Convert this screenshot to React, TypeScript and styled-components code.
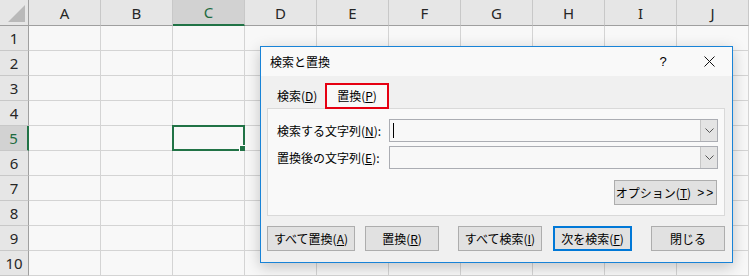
import { Fragment } from "react";
import styled, { createGlobalStyle } from "styled-components";

const GREEN = "#217346";
const columns = ["A", "B", "C", "D", "E", "F", "G", "H", "I", "J"];
const rows = [1, 2, 3, 4, 5, 6, 7, 8, 9, 10];
const activeCol = "C";
const activeRow = 5;

const GlobalStyle = createGlobalStyle`
  html, body {
    margin: 0;
    padding: 0;
    background: #f8f8f8;
    overflow: hidden;
  }
  * {
    box-sizing: border-box;
  }
`;

export default function App() {
  return (
    <>
      <GlobalStyle />
      <Screen>
        <Sheet>
          <Corner>
            <svg width="17" height="17" viewBox="0 0 17 17">
              <polygon points="17,0 17,17 0,17" fill="#b9b9b9" />
            </svg>
          </Corner>
          {columns.map((c) => (
            <ColHead key={c} $active={c === activeCol}>
              {c}
            </ColHead>
          ))}
          {rows.map((r) => (
            <Fragment key={r}>
              <RowHead $active={r === activeRow}>{r}</RowHead>
              {columns.map((c) => (
                <Cell key={c} $selected={r === activeRow && c === activeCol} />
              ))}
            </Fragment>
          ))}
        </Sheet>

        <Dialog>
          <TitleBar>
            <Title>検索と置換</Title>
            <TitleButton>?</TitleButton>
            <TitleButton>
              <svg width="11" height="11" viewBox="0 0 11 11">
                <path d="M0.5 0.5 L10.5 10.5 M10.5 0.5 L0.5 10.5" stroke="#111" strokeWidth="1" />
              </svg>
            </TitleButton>
          </TitleBar>
          <Body>
            <TabStrip>
              <Tab $width={58}>
                検索(<u>D</u>)
              </Tab>
              <Tab $width={64} $selected>
                置換(<u>P</u>)
              </Tab>
            </TabStrip>
            <Panel>
              <FieldRow>
                <Label>
                  検索する文字列(<u>N</u>):
                </Label>
                <Combo>
                  <Caret />
                  <DropButton>
                    <svg width="9" height="5" viewBox="0 0 9 5">
                      <path d="M0.5 0.5 L4.5 4.5 L8.5 0.5" stroke="#555" fill="none" />
                    </svg>
                  </DropButton>
                </Combo>
              </FieldRow>
              <FieldRow>
                <Label>
                  置換後の文字列(<u>E</u>):
                </Label>
                <Combo>
                  <DropButton>
                    <svg width="9" height="5" viewBox="0 0 9 5">
                      <path d="M0.5 0.5 L4.5 4.5 L8.5 0.5" stroke="#555" fill="none" />
                    </svg>
                  </DropButton>
                </Combo>
              </FieldRow>
              <OptionsRow>
                <Button $width={103}>
                  オプション(<u>T</u>)<Arrows>&gt;&gt;</Arrows>
                </Button>
              </OptionsRow>
            </Panel>
            <ButtonRow>
              <Button $width={88}>
                すべて置換(<u>A</u>)
              </Button>
              <Button $width={74} $gap={10}>
                置換(<u>R</u>)
              </Button>
              <Button $width={84} $gap={19}>
                すべて検索(<u>I</u>)
              </Button>
              <Button $width={79} $gap={11} $focused>
                次を検索(<u>F</u>)
              </Button>
              <Button $width={74} $gap={19}>
                閉じる
              </Button>
            </ButtonRow>
          </Body>
        </Dialog>
      </Screen>
    </>
  );
}

const Screen = styled.div`
  position: relative;
  width: 749px;
  height: 276px;
  overflow: hidden;
  font-family: "Noto Sans CJK JP", "Noto Sans", sans-serif;
`;

const Sheet = styled.div`
  display: grid;
  grid-template-columns: 29px repeat(10, 72px);
  grid-template-rows: 26px;
  grid-auto-rows: 25px;
  font-family: "Noto Sans", "Noto Sans CJK JP", sans-serif;
  font-size: 15px;
  color: #262626;
`;

const Corner = styled.div`
  display: flex;
  align-items: flex-end;
  justify-content: flex-end;
  padding: 0 3px 3px 0;
  background: #e6e6e6;
  border-right: 1px solid #9f9f9f;
  border-bottom: 1px solid #9f9f9f;
`;

const ColHead = styled.div<{ $active?: boolean }>`
  display: flex;
  align-items: center;
  justify-content: center;
  background: ${(p) => (p.$active ? "#d2d2d2" : "#e6e6e6")};
  color: ${(p) => (p.$active ? "#1d6b40" : "#262626")};
  border-right: 1px solid #c8c8c8;
  border-bottom: ${(p) => (p.$active ? `2px solid ${GREEN}` : "1px solid #9f9f9f")};
`;

const RowHead = styled.div<{ $active?: boolean }>`
  display: flex;
  align-items: center;
  justify-content: center;
  background: ${(p) => (p.$active ? "#d2d2d2" : "#e6e6e6")};
  color: ${(p) => (p.$active ? "#1d6b40" : "#262626")};
  border-bottom: 1px solid #c8c8c8;
  border-right: ${(p) => (p.$active ? `2px solid ${GREEN}` : "1px solid #9f9f9f")};
`;

const Cell = styled.div<{ $selected?: boolean }>`
  position: relative;
  background: #f8f8f8;
  border-right: 1px solid #d4d4d4;
  border-bottom: 1px solid #d4d4d4;
  ${(p) =>
    p.$selected &&
    `
    &::before {
      content: "";
      position: absolute;
      left: -1px;
      top: -1px;
      right: -1px;
      bottom: -1px;
      border: 2px solid ${GREEN};
    }
    &::after {
      content: "";
      position: absolute;
      right: -3px;
      bottom: -3px;
      width: 6px;
      height: 6px;
      background: ${GREEN};
      border: 1px solid #fff;
    }
  `}
`;

const Dialog = styled.div`
  position: absolute;
  left: 260px;
  top: 46px;
  width: 473px;
  height: 217px;
  display: flex;
  flex-direction: column;
  border: 1px solid #1883d7;
  background: #f0f0f0;
  box-shadow: 0 4px 14px rgba(0, 0, 0, 0.22);
  font-size: 12px;
  color: #000;
`;

const TitleBar = styled.div`
  display: flex;
  align-items: center;
  height: 29px;
  background: #f9f9f9;
`;

const Title = styled.div`
  flex: 1;
  padding-left: 9px;
  font-size: 12px;
  line-height: 16px;
`;

const TitleButton = styled.div`
  width: 46px;
  height: 29px;
  display: flex;
  align-items: center;
  justify-content: center;
  font-family: "Liberation Sans", sans-serif;
  font-size: 13px;
`;

const Body = styled.div`
  flex: 1;
  display: flex;
  flex-direction: column;
  padding: 7px 7px 0 6px;
`;

const TabStrip = styled.div`
  display: flex;
  align-items: flex-end;
  height: 26px;
  margin-bottom: -1px;
  position: relative;
  z-index: 1;
`;

const Tab = styled.div<{ $width: number; $selected?: boolean }>`
  width: ${(p) => p.$width}px;
  height: 26px;
  display: flex;
  align-items: center;
  justify-content: ${(p) => (p.$selected ? "center" : "flex-start")};
  padding-left: ${(p) => (p.$selected ? 0 : 10)}px;
  line-height: 16px;
  background: ${(p) => (p.$selected ? "#f9f9f9" : "transparent")};
  border: ${(p) => (p.$selected ? "2px solid #e60012" : "none")};
`;

const Panel = styled.div`
  height: 108px;
  display: flex;
  flex-direction: column;
  gap: 4px;
  padding: 10px 6px 0 9px;
  background: #f9f9f9;
  border: 1px solid #d9d9d9;
`;

const FieldRow = styled.div`
  display: flex;
  align-items: center;
`;

const Label = styled.div`
  width: 112px;
  line-height: 16px;
  white-space: nowrap;
`;

const Combo = styled.div`
  flex: 1;
  height: 23px;
  display: flex;
  align-items: center;
  background: #f8f8f8;
  border: 1px solid #abadb3;
`;

const Caret = styled.span`
  width: 1px;
  height: 15px;
  margin-left: 3px;
  background: #000;
`;

const DropButton = styled.div`
  margin-left: auto;
  width: 17px;
  height: 21px;
  display: flex;
  align-items: center;
  justify-content: center;
  background: #e4e4e4;
  border-left: 1px solid #c6c6c6;
`;

const OptionsRow = styled.div`
  display: flex;
  justify-content: flex-end;
  margin-top: 7px;
  padding-right: 1px;
`;

const Arrows = styled.span`
  margin-left: 6px;
  letter-spacing: 2px;
  font-family: "Liberation Sans", sans-serif;
`;

const ButtonRow = styled.div`
  display: flex;
  margin-top: 10px;
`;

const Button = styled.div<{ $width: number; $gap?: number; $focused?: boolean }>`
  width: ${(p) => p.$width}px;
  height: 25px;
  margin-left: ${(p) => p.$gap ?? 0}px;
  display: flex;
  align-items: center;
  justify-content: center;
  line-height: 16px;
  white-space: nowrap;
  background: #e1e1e1;
  border: ${(p) => (p.$focused ? "2px solid #0078d7" : "1px solid #adadad")};
`;
